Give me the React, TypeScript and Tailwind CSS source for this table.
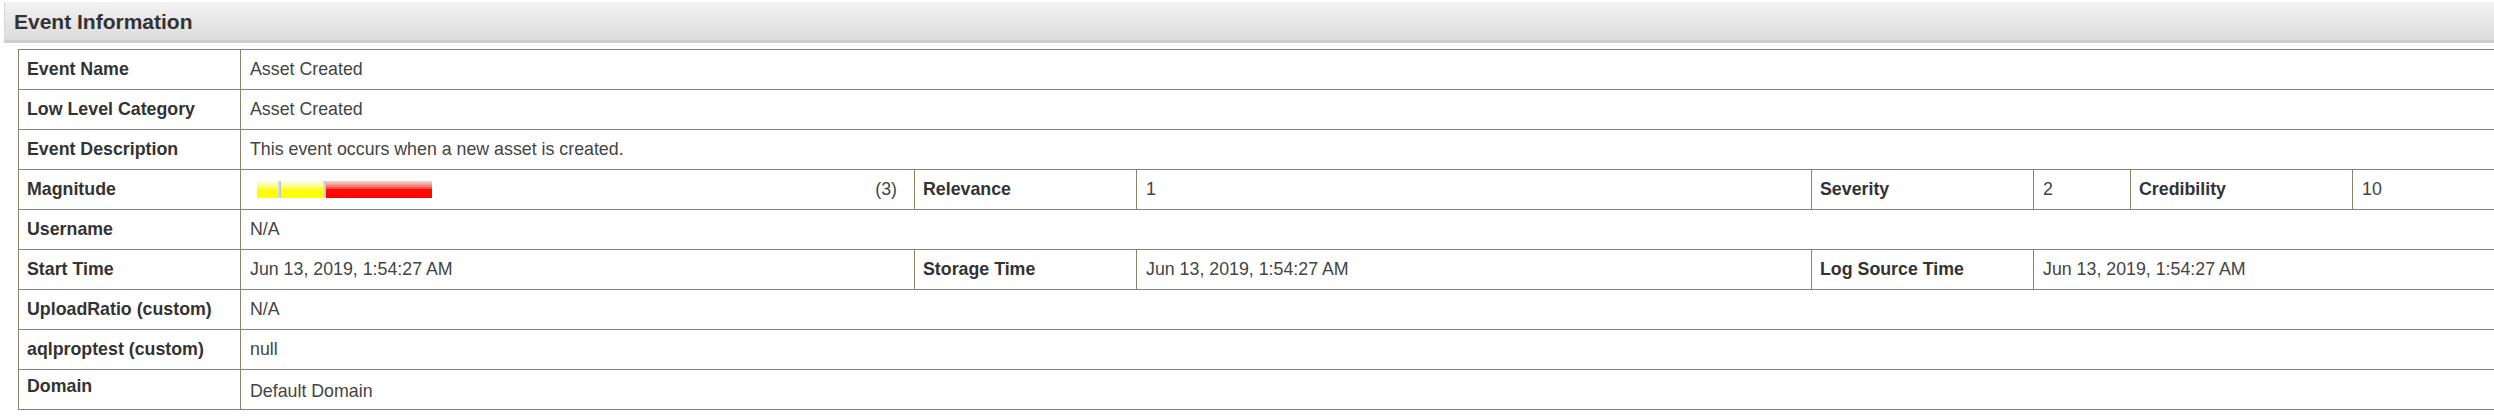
const font = { fontFamily: '"Liberation Sans", Arial, sans-serif' };

function Label({ children, className = '' }: { children: React.ReactNode; className?: string }) {
  return (
    <td className={`border border-[#8a836a] pl-[8px] pr-2 font-bold text-[#333] align-middle ${className}`}>
      {children}
    </td>
  );
}

function Value({ children, span = 1, className = '' }: { children: React.ReactNode; span?: number; className?: string }) {
  return (
    <td colSpan={span} className={`border border-[#8a836a] pl-[9px] pr-2 text-[#444] align-middle ${className}`}>
      {children}
    </td>
  );
}

function MagnitudeBar() {
  return (
    <div className="flex h-[17px] items-stretch">
      <div className="w-[21px] bg-gradient-to-b from-[#ffffd8] via-[#ffff00] to-[#ffff00]" />
      <div className="w-[3px] bg-gradient-to-r from-[#e4e4e4] to-[#bdbdbd]" />
      <div className="w-[42px] bg-gradient-to-b from-[#ffffd8] via-[#ffff00] to-[#ffff00]" />
      <div className="w-[3px] bg-gradient-to-r from-[#e4e4e4] to-[#bdbdbd]" />
      <div className="w-[106px] bg-gradient-to-b from-[#ffd4d4] via-[#ff0a0a] to-[#ff0000]" />
    </div>
  );
}

export default function App() {
  const date = 'Jun 13, 2019, 1:54:27 AM';
  return (
    <div className="w-[2494px] h-[416px] overflow-hidden bg-white" style={font}>
      <div className="pt-[2px] pl-[4px]">
        <div className="h-[41px] w-[2600px] border-l border-[#d6d6d6] border-b-[3px] border-b-[#cdcdcd] bg-gradient-to-b from-[#f3f3f3] to-[#dcdcdc] pl-[9px] flex items-center">
          <span className="text-[21px] font-bold text-[#333] leading-none pt-[1px]">Event Information</span>
        </div>
      </div>
      <div className="pt-[6px] pl-[18px]">
        <table className="table-fixed border-collapse w-[2634px] text-[17.8px] leading-none">
          <colgroup>
            <col className="w-[222px]" />
            <col className="w-[674px]" />
            <col className="w-[222px]" />
            <col className="w-[675px]" />
            <col className="w-[222px]" />
            <col className="w-[97px]" />
            <col className="w-[222px]" />
            <col className="w-[300px]" />
          </colgroup>
          <tbody>
            <tr className="h-[40px]">
              <Label>Event Name</Label>
              <Value span={7}>Asset Created</Value>
            </tr>
            <tr className="h-[40px]">
              <Label>Low Level Category</Label>
              <Value span={7}>Asset Created</Value>
            </tr>
            <tr className="h-[40px]">
              <Label>Event Description</Label>
              <Value span={7}>This event occurs when a new asset is created.</Value>
            </tr>
            <tr className="h-[40px]">
              <Label>Magnitude</Label>
              <Value className="pl-[16px] pr-[17px]">
                <div className="flex items-center justify-between">
                  <MagnitudeBar />
                  <span className="pt-[1px]">(3)</span>
                </div>
              </Value>
              <Label>Relevance</Label>
              <Value>1</Value>
              <Label>Severity</Label>
              <Value>2</Value>
              <Label>Credibility</Label>
              <Value>10</Value>
            </tr>
            <tr className="h-[40px]">
              <Label>Username</Label>
              <Value span={7}>N/A</Value>
            </tr>
            <tr className="h-[40px]">
              <Label>Start Time</Label>
              <Value>{date}</Value>
              <Label>Storage Time</Label>
              <Value>{date}</Value>
              <Label>Log Source Time</Label>
              <Value span={3}>{date}</Value>
            </tr>
            <tr className="h-[40px]">
              <Label>UploadRatio (custom)</Label>
              <Value span={7}>N/A</Value>
            </tr>
            <tr className="h-[40px]">
              <Label>aqlproptest (custom)</Label>
              <Value span={7}>null</Value>
            </tr>
            <tr className="h-[40px]">
              <Label className="!align-top pt-[8px]">Domain</Label>
              <Value span={7} className="pt-[4px]">Default Domain</Value>
            </tr>
          </tbody>
        </table>
      </div>
    </div>
  );
}
